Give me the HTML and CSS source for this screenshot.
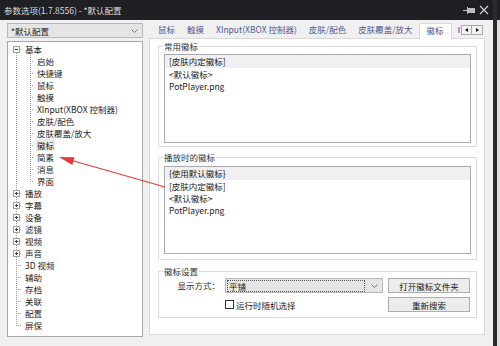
FILE: index.html
```html
<!DOCTYPE html>
<html lang="zh-CN">
  <head>
    <meta charset="UTF-8" />
    <title>参数选项</title>
    <link rel="stylesheet" href="styles.css">
  </head>
  <body>
    <div class="screen">
      <div class="dialog">
        <div class="titlebar">
          <span class="title">参数选项(1.7.8556) - *默认配置</span>
          <span class="controls">
            <svg width="12" height="8" viewBox="0 0 12 8"><path d="M0 4.5h4M4.5 1v7" stroke="#bdbdbd" fill="none"/><rect x="5" y="2" width="7" height="5" fill="#bdbdbd"/></svg>
            <svg width="10" height="10" viewBox="0 0 10 10"><path d="M1 1l8 8M9 1l-8 8" stroke="#d0d0d0" stroke-width="1.2" fill="none"/></svg>
          </span>
        </div>

        <div class="main">
          <div class="side">
            <div class="combo">
              <span class="combo-text">*默认配置</span>
              <svg class="chev" width="7" height="4" viewBox="0 0 7 4"><path d="M0.5 0.5l3 3 3-3" stroke="#777" fill="none"/></svg>
            </div>

            <div class="tree">
              <div class="row"><span class="g g-top"><i class="box"></i></span><span class="label">基本</span></div>
              <div class="row"><span class="g g-pipe"></span><span class="g g-sub"></span><span class="label">启始</span></div>
              <div class="row"><span class="g g-pipe"></span><span class="g g-sub"></span><span class="label">快捷键</span></div>
              <div class="row"><span class="g g-pipe"></span><span class="g g-sub"></span><span class="label">鼠标</span></div>
              <div class="row"><span class="g g-pipe"></span><span class="g g-sub"></span><span class="label">触摸</span></div>
              <div class="row"><span class="g g-pipe"></span><span class="g g-sub"></span><span class="label">XInput(XBOX 控制器)</span></div>
              <div class="row"><span class="g g-pipe"></span><span class="g g-sub"></span><span class="label">皮肤/配色</span></div>
              <div class="row"><span class="g g-pipe"></span><span class="g g-sub"></span><span class="label">皮肤覆盖/放大</span></div>
              <div class="row"><span class="g g-pipe"></span><span class="g g-sub"></span><span class="label sel">徽标</span></div>
              <div class="row"><span class="g g-pipe"></span><span class="g g-sub"></span><span class="label">简素</span></div>
              <div class="row"><span class="g g-pipe"></span><span class="g g-sub"></span><span class="label">消息</span></div>
              <div class="row"><span class="g g-pipe"></span><span class="g g-sub-end"></span><span class="label">界面</span></div>
              <div class="row"><span class="g g-tee"><i class="box plus"></i></span><span class="label">播放</span></div>
              <div class="row"><span class="g g-tee"><i class="box plus"></i></span><span class="label">字幕</span></div>
              <div class="row"><span class="g g-tee"><i class="box plus"></i></span><span class="label">设备</span></div>
              <div class="row"><span class="g g-tee"><i class="box plus"></i></span><span class="label">滤镜</span></div>
              <div class="row"><span class="g g-tee"><i class="box plus"></i></span><span class="label">视频</span></div>
              <div class="row"><span class="g g-tee"><i class="box plus"></i></span><span class="label">声音</span></div>
              <div class="row"><span class="g g-tee"></span><span class="label">3D 视频</span></div>
              <div class="row"><span class="g g-tee"></span><span class="label">辅助</span></div>
              <div class="row"><span class="g g-tee"></span><span class="label">存档</span></div>
              <div class="row"><span class="g g-tee"></span><span class="label">关联</span></div>
              <div class="row"><span class="g g-tee"></span><span class="label">配置</span></div>
              <div class="row"><span class="g g-end"></span><span class="label">屏保</span></div>
            </div>
          </div>

          <div class="content">
            <div class="tabs">
              <div class="tab-list">
                <span class="tab">鼠标</span>
                <span class="tab">触摸</span>
                <span class="tab">XInput(XBOX 控制器)</span>
                <span class="tab">皮肤/配色</span>
                <span class="tab">皮肤覆盖/放大</span>
                <span class="tab active">徽标</span>
                <span class="tab-peek"></span>
              </div>
              <div class="tab-scroll">
                <span class="arrow-btn"><i class="tri left"></i></span>
                <span class="arrow-btn"><i class="tri right"></i></span>
              </div>
            </div>

            <div class="panel">
              <fieldset class="group group-common">
                <legend>常用徽标</legend>
                <div class="list list-common">
                  <div class="item sel">[皮肤内定徽标]</div>
                  <div class="item">&lt;默认徽标&gt;</div>
                  <div class="item">PotPlayer.png</div>
                </div>
              </fieldset>

              <fieldset class="group group-play">
                <legend>播放时的徽标</legend>
                <div class="list list-play">
                  <div class="item sel">{使用默认徽标}</div>
                  <div class="item">[皮肤内定徽标]</div>
                  <div class="item">&lt;默认徽标&gt;</div>
                  <div class="item">PotPlayer.png</div>
                </div>
              </fieldset>

              <fieldset class="group group-settings">
                <legend>徽标设置</legend>
                <div class="settings">
                  <span class="field-label">显示方式：</span>
                  <div class="combo combo-mode">
                    <span class="focus">平铺</span>
                    <svg class="chev" width="7" height="4" viewBox="0 0 7 4"><path d="M0.5 0.5l3 3 3-3" stroke="#777" fill="none"/></svg>
                  </div>
                  <button class="btn">打开徽标文件夹</button>
                  <span></span>
                  <label class="check"><span class="checkbox"></span>运行时随机选择</label>
                  <button class="btn">重新搜索</button>
                </div>
              </fieldset>
            </div>
          </div>
        </div>
      </div>
      <div class="edge"></div>
      <div class="behind"></div>
    </div>

    <!-- annotation arrow drawn over the dialog -->
    <svg class="arrow" width="500" height="346" viewBox="0 0 500 346">
      <path d="M72 160.5L165 187" stroke="#e5393a" stroke-width="1.2" fill="none"/>
      <polygon points="59,157 74.5,157.3 72.3,164.9" fill="#e5393a"/>
    </svg>
  </body>
</html>
```

FILE: styles.css
```css
* {
  margin: 0;
  padding: 0;
  box-sizing: border-box;
}

body {
  width: 500px;
  height: 346px;
  overflow: hidden;
  background: #f0f0f0;
  color: #222;
  font-family: "Noto Sans CJK SC", "Noto Sans", sans-serif;
  font-size: 8.5px;
}

.screen {
  display: flex;
  height: 346px;
}

.dialog {
  width: 493px;
  display: flex;
  flex-direction: column;
  background: #f0f0f0;
}

.edge {
  width: 4px;
  background: #2a2b2f;
}

.behind {
  flex: 1;
  background: linear-gradient(#1f2024 0 20px, #dcdcdc 20px);
}

/* title bar */
.titlebar {
  height: 20px;
  display: flex;
  align-items: center;
  padding: 0 4px 0 4px;
  background: #1f2024;
  color: #dcdcdc;
  line-height: 12px;
}

.title {
  flex: 1;
}

.controls {
  display: flex;
  align-items: center;
  gap: 4px;
}

/* body */
.main {
  flex: 1;
  display: flex;
  gap: 6px;
  padding: 2px 8px 0 7px;
}

.side {
  width: 136px;
  display: flex;
  flex-direction: column;
  gap: 3px;
  padding-top: 1px;
}

.combo {
  height: 15px;
  display: flex;
  align-items: center;
  padding: 0 4px 0 3px;
  background: #e5e5e5;
  border: 1px solid #b9b9b9;
  line-height: 12px;
}

.combo-text {
  flex: 1;
}

.chev {
  flex: none;
}

/* tree */
.tree {
  height: 296px;
  padding: 1px 0 0 2px;
  background: #fff;
  border: 1px solid #a7a7a7;
  color: #1c1c1c;
  --v: repeating-linear-gradient(to bottom, #a2a2a2 0 1px, transparent 1px 2px);
  --h: repeating-linear-gradient(to right, #a2a2a2 0 1px, transparent 1px 2px);
}

.row {
  height: 12px;
  display: flex;
  align-items: center;
}

.g {
  width: 12px;
  height: 12px;
  flex: none;
  padding: 3px 0 0 3px;
  background-repeat: no-repeat;
}

.g-pipe {
  background-image: var(--v);
  background-size: 1px 12px;
  background-position: 6px 0;
}

.g-top {
  background-image: var(--v), var(--h);
  background-size: 1px 6px, 6px 1px;
  background-position: 6px 6px, 6px 6px;
}

.g-tee {
  background-image: var(--v), var(--h);
  background-size: 1px 12px, 6px 1px;
  background-position: 6px 0, 6px 6px;
}

.g-end {
  background-image: var(--v), var(--h);
  background-size: 1px 7px, 6px 1px;
  background-position: 6px 0, 6px 6px;
}

.g-sub {
  background-image: var(--v), var(--h);
  background-size: 1px 12px, 4px 1px;
  background-position: 8px 0, 8px 6px;
}

.g-sub-end {
  background-image: var(--v), var(--h);
  background-size: 1px 7px, 4px 1px;
  background-position: 8px 0, 8px 6px;
}

.box {
  display: block;
  width: 7px;
  height: 7px;
  border: 1px solid #a0a0a0;
  background: linear-gradient(#444, #444) center / 3px 1px no-repeat, #fff;
}

.box.plus {
  background: linear-gradient(#444, #444) center / 3px 1px no-repeat,
    linear-gradient(#444, #444) center / 1px 3px no-repeat, #fff;
}

.label {
  margin-left: 2px;
  padding: 0 1px;
  line-height: 12px;
  white-space: nowrap;
}

.label.sel {
  background: #ececec;
}

/* tabs */
.content {
  width: 336px;
  display: flex;
  flex-direction: column;
}

.tabs {
  height: 16px;
  display: flex;
  position: relative;
  z-index: 1;
}

.tab-list {
  flex: 1;
  display: flex;
  overflow: hidden;
  padding-left: 3px;
  height: 17px;
}

.tab {
  flex: none;
  height: 16px;
  padding: 0 6px;
  line-height: 15px;
  color: #4e5a92;
  white-space: nowrap;
}

.tab.active {
  margin-top: 1px;
  padding: 0 7px;
  background: #fff;
  border: 1px solid #d9d9d9;
  border-bottom: none;
  line-height: 13px;
}

/* edge of the next tab, hidden behind the scroll buttons */
.tab-peek {
  flex: none;
  width: 3px;
  height: 6px;
  margin: 5px 0 0 6px;
  border-left: 2px solid #c58ac5;
}

.tab-scroll {
  display: flex;
  margin: 3px 2px 0 0;
}

.arrow-btn {
  width: 11px;
  height: 10px;
  display: flex;
  align-items: center;
  justify-content: center;
  background: #f2f2f2;
  border: 1px solid #a9a9a9;
}

.arrow-btn + .arrow-btn {
  border-left: none;
}

.tri {
  width: 0;
  height: 0;
  border-top: 2.5px solid transparent;
  border-bottom: 2.5px solid transparent;
}

.tri.left {
  border-right: 3px solid #111;
}

.tri.right {
  border-left: 3px solid #111;
}

/* tab page */
.panel {
  height: 297px;
  padding: 1px 7px 0 8px;
  background: #fff;
  border: 1px solid #d9d9d9;
}

.group {
  border: 1px solid #dcdcdc;
  padding: 2px 5px 3px;
}

.group legend {
  padding: 0 1px;
  margin-left: -1px;
  line-height: 12px;
  color: #333;
}

.group-play {
  margin-top: 4px;
  padding: 3px 5px 5px;
}

.group-settings {
  margin-top: 5px;
  padding: 1px 5px 5px;
}

.list {
  background: #fff;
  border: 1px solid #aaaaae;
}

.list-common {
  height: 89px;
}

.list-play {
  height: 88px;
}

.item {
  height: 12px;
  padding-left: 4px;
  line-height: 12px;
}

.item.sel {
  height: 13px;
  background: #f0f0f0;
}

/* settings */
.settings {
  display: grid;
  grid-template-columns: 56px 158px 82px;
  grid-auto-rows: 15px;
  column-gap: 5px;
  row-gap: 4px;
}

.field-label {
  text-align: right;
  line-height: 15px;
  color: #333;
}

.combo-mode {
  padding: 1px 4px 1px 1px;
}

.focus {
  flex: 1;
  height: 12px;
  margin-right: 6px;
  padding-left: 1px;
  border: 1px dotted #555;
  line-height: 10px;
}

.btn {
  height: 15px;
  background: #ececec;
  border: 1px solid #adadad;
  color: #222;
  font-family: inherit;
  font-size: 8.5px;
  line-height: 12px;
}

.check {
  display: flex;
  align-items: center;
  gap: 2px;
  color: #222;
}

.checkbox {
  width: 9px;
  height: 9px;
  background: #fff;
  border: 1px solid #333;
}

/* annotation overlay */
.arrow {
  position: absolute;
  top: 0;
  left: 0;
  pointer-events: none;
}
```
